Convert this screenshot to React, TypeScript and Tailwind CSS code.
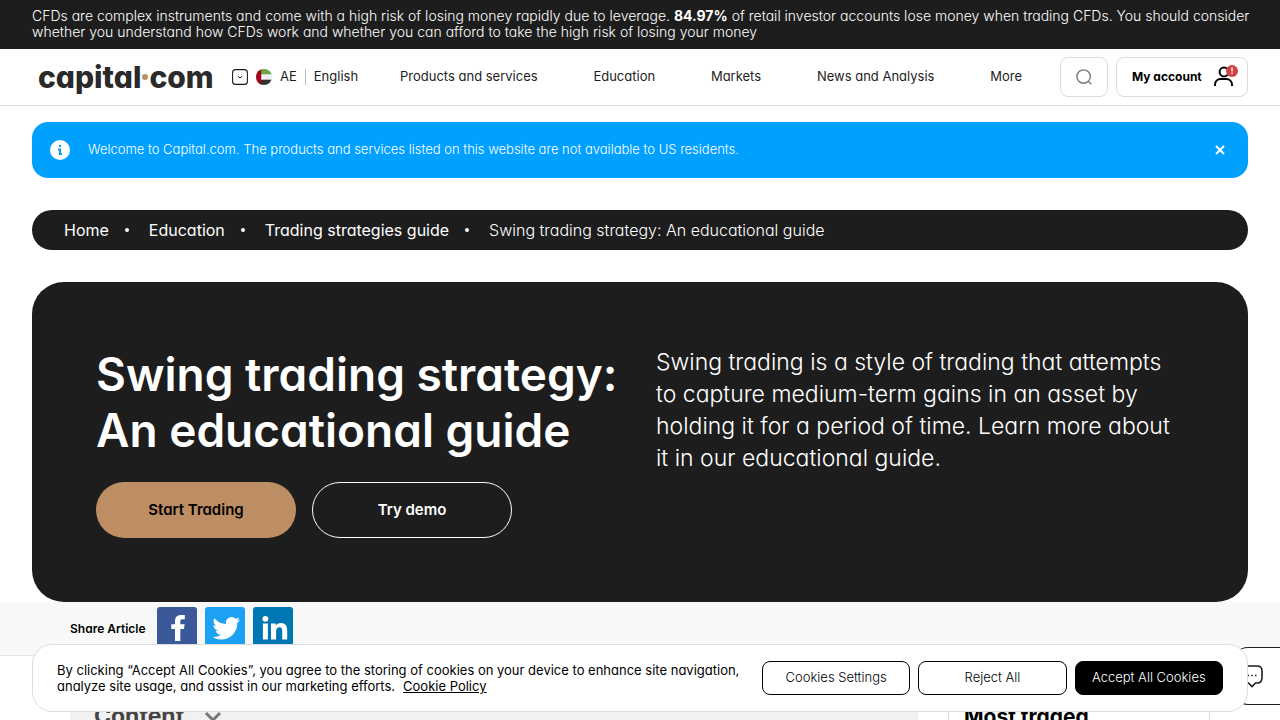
import React from "react";

const navItems = ["Products and services", "Education", "Markets", "News and Analysis", "More"];
const crumbs = ["Home", "Education", "Trading strategies guide"];

function Flag() {
  return (
    <svg viewBox="0 0 16 16" className="size-4" aria-hidden="true">
      <defs>
        <clipPath id="flag-round">
          <circle cx="8" cy="8" r="8" />
        </clipPath>
      </defs>
      <g clipPath="url(#flag-round)">
        <rect width="16" height="16" fill="#f0f0f0" />
        <rect width="16" height="5.3" fill="#6da544" />
        <rect y="10.7" width="16" height="5.3" fill="#333" />
        <rect width="5.2" height="16" fill="#a2001d" />
      </g>
    </svg>
  );
}

function Header() {
  return (
    <header className="flex h-[57px] items-center border-b border-[#dcdcdc] bg-white px-8 text-[13px] text-[#1d1d1d]">
      <a href="#" aria-label="capital.com" className="flex w-[200px] shrink-0 items-center pl-[6px] text-[30px] leading-10 font-extrabold text-[#2a2a2a]">
        <span>capital</span>
        <span className="mx-px size-[6px] shrink-0 rounded-full bg-[#bd8e64]" />
        <span>com</span>
      </a>
      <button className="flex w-[168px] shrink-0 items-center gap-2 text-left">
        <svg viewBox="0 0 16 16" className="size-4" fill="none" stroke="#1d1d1d" aria-hidden="true">
          <rect x="0.6" y="0.6" width="14.8" height="14.8" rx="3" strokeWidth="1.1" />
          <path d="m6 7.2 2 1.8 2-1.8" />
        </svg>
        <Flag />
        <span>AE</span>
        <span className="h-4 w-px bg-[#bbb]" />
        <span>English</span>
      </button>
      <nav className="flex flex-1 justify-between pr-[38px]">
        {navItems.map((n) => (
          <a key={n} href="#">{n}</a>
        ))}
      </nav>
      <button aria-label="Search" className="mr-2 flex h-10 w-12 items-center justify-center rounded-lg border border-[#dcdcdc]">
        <svg viewBox="0 0 16 16" className="size-4" fill="none" stroke="#777" strokeWidth="1.4" aria-hidden="true">
          <circle cx="7.6" cy="7.6" r="6.7" />
          <path d="m12.6 12.6 2.6 2.6" />
        </svg>
      </button>
      <button className="flex h-10 w-[132px] items-center justify-between rounded-lg border border-[#dcdcdc] pr-2 pl-[15px] text-[12px] font-bold text-black">
        My account
        <svg viewBox="0 0 26 24" className="h-6 w-[26px]" aria-hidden="true">
          <g fill="none" stroke="#000" strokeWidth="2">
            <circle cx="11" cy="7" r="4.4" />
            <path d="M2 21v-1.5a5.500 5.500 0 0 1 5.500-5.500h6a5.500 5.500 0 0 1 5.500 5.500V21" />
          </g>
          <circle cx="19" cy="6" r="6" fill="#d64045" />
          <path d="M19 2.500v4M19 7.600v1.500" stroke="#fff" strokeWidth="1.400" />
        </svg>
      </button>
    </header>
  );
}

function Socials() {
  return (
    <div className="flex gap-2">
      <a href="#" aria-label="Facebook">
        <svg viewBox="0 0 40 40" className="size-10">
          <rect width="40" height="40" rx="3" fill="#3b5998" />
          <path fill="#fff" d="M18 34V22h-3.700v-4.700H18v-3.200C18 10.200 20.200 8 24 8h3.800v4.300h-2.300c-1.800 0-2.200.8-2.200 2.200v2.800h4.300l-.6 4.700h-3.700v12z" />
        </svg>
      </a>
      <a href="#" aria-label="Twitter">
        <svg viewBox="0 0 40 40" className="size-10">
          <rect width="40" height="40" rx="3" fill="#1da1f2" />
          <path transform="translate(7.500 7.500) scale(1.150)" fill="#fff" d="M23.950 4.570a10 10 0 0 1-2.820.77 4.960 4.960 0 0 0 2.160-2.720c-.95.550-2 .960-3.130 1.180a4.920 4.920 0 0 0-8.380 4.480C7.690 8.100 4.070 6.130 1.640 3.160a4.820 4.820 0 0 0-.67 2.480c0 1.710.87 3.210 2.190 4.100a4.900 4.900 0 0 1-2.230-.620v.060a4.920 4.920 0 0 0 3.950 4.830 5 5 0 0 1-2.210.080 4.940 4.940 0 0 0 4.600 3.420A9.870 9.870 0 0 1 0 19.540a13.990 13.990 0 0 0 7.550 2.210c9.050 0 14-7.500 14-13.980 0-.210 0-.420-.020-.630a9.940 9.940 0 0 0 2.460-2.550z" />
        </svg>
      </a>
      <a href="#" aria-label="LinkedIn">
        <svg viewBox="0 0 40 40" className="size-10">
          <rect width="40" height="40" rx="3" fill="#0077b5" />
          <g fill="#fff">
            <circle cx="12.400" cy="11.800" r="2.900" />
            <path d="M9.900 16.400h5V32.500h-5zM18 16.400h4.700v2.200c1-1.600 2.600-2.600 5-2.600 4.800 0 6.500 2.800 6.500 7.400v9.100h-5v-8.300c0-2.200-.4-4-2.700-4-2.400 0-3.400 1.700-3.400 4v8.300H18z" />
          </g>
        </svg>
      </a>
    </div>
  );
}

function CookieBanner() {
  const base = "h-[34px] flex-1 rounded-lg border border-black text-[13px] font-light";
  return (
    <section aria-label="Cookies" className="fixed inset-x-8 bottom-2 z-20 flex h-[68px] items-center justify-between rounded-[20px] border border-[#dcdcdc] bg-white px-6 text-black">
      <p className="w-[692px] text-[13px] leading-4">
        By clicking “Accept All Cookies”, you agree to the storing of cookies on your device to enhance site navigation, analyze site usage, and assist in our marketing efforts.
        <a href="#" className="ml-2 underline">Cookie Policy</a>
      </p>
      <div className="flex w-[461px] gap-2">
        <button className={base}>Cookies Settings</button>
        <button className={base}>Reject All</button>
        <button className="h-[34px] flex-1 rounded-lg border border-black bg-black text-[13px] font-light text-white">Accept All Cookies</button>
      </div>
    </section>
  );
}

export default function App() {
  return (
    <div className="h-screen overflow-hidden bg-white font-['Inter',sans-serif] text-black [font-feature-settings:'cv11']">
      <p className="bg-[#1d1d1d] pt-2 pr-5 pb-[9px] pl-8 text-[14px] leading-4 font-light text-white">
        CFDs are complex instruments and come with a high risk of losing money rapidly due to leverage. <strong className="font-bold">84.97%</strong> of retail investor accounts lose money when trading CFDs. You should consider whether you understand how CFDs work and whether you can afford to take the high risk of losing your money
      </p>
      <Header />
      <main>
        <div className="px-8 pt-4">
          <div className="flex h-14 items-center rounded-2xl bg-[#00a0ff] pr-[22px] pl-[18px] text-[13px] font-light text-white">
            <svg viewBox="0 0 20 20" className="mr-[18px] size-5" aria-hidden="true">
              <circle cx="10" cy="10" r="10" fill="#fff" />
              <path d="M9 5h2v2H9zM8 8.500h3V13h1v2H9v-4.500H8z" fill="#00a0ff" />
            </svg>
            <p className="flex-1">Welcome to Capital.com. The products and services listed on this website are not available to US residents.</p>
            <button aria-label="Close">
              <svg viewBox="0 0 12 12" className="size-3" stroke="#fff" strokeWidth="2" aria-hidden="true">
                <path d="m2 2 8 8M10 2l-8 8" />
              </svg>
            </button>
          </div>
          <nav aria-label="Breadcrumb" className="mt-8 flex h-10 items-center rounded-[20px] bg-[#1d1d1d] px-8 text-[16px] text-white">
            {crumbs.map((c) => (
              <React.Fragment key={c}>
                <a href="#">{c}</a>
                <span className="mr-5 ml-4 size-1 rounded-full bg-white" />
              </React.Fragment>
            ))}
            <span className="font-light">Swing trading strategy: An educational guide</span>
          </nav>
          <section className="mt-8 grid grid-cols-2 gap-8 rounded-[32px] bg-[#1d1d1d] p-16 text-white">
            <div>
              <h1 className="text-[46px] leading-[56px] font-semibold whitespace-nowrap">
                Swing trading strategy:
                <br />
                An educational guide
              </h1>
              <div className="mt-6 flex gap-4 text-[15px] font-semibold">
                <button className="h-14 w-[200px] rounded-full bg-[#bd8e64] text-black">Start Trading</button>
                <button className="h-14 w-[200px] rounded-full border border-white">Try demo</button>
              </div>
            </div>
            <p className="text-[23px] leading-8 font-light">
              Swing trading is a style of trading that attempts to capture medium-term gains in an asset by holding it for a period of time. Learn more about it in our educational guide.
            </p>
          </section>
        </div>
        <div className="flex h-[54px] items-start border-b border-[#e4e4e4] bg-[#f8f8f8] px-[70px] pt-[5px]">
          <span className="mt-3 w-[87px] text-[12px] leading-5 font-semibold whitespace-nowrap">Share Article</span>
          <Socials />
        </div>
        <div className="flex gap-[30px] px-[70px] pt-6">
          <section className="flex h-40 flex-1 items-start gap-5 bg-[#f1f1f2] px-6 pt-5 text-[#444]">
            <h2 className="text-[23px] leading-8 font-bold">Content</h2>
            <svg viewBox="0 0 18 18" className="mt-2 size-[18px]" fill="none" stroke="#777" strokeWidth="3" aria-hidden="true">
              <path d="m2 5 7 7 7-7" />
            </svg>
          </section>
          <aside className="h-40 w-[262px] border border-[#dcdcdc] px-[15px] pt-5">
            <h2 className="text-[21px] leading-8 font-bold">Most traded</h2>
          </aside>
        </div>
      </main>
      <button aria-label="Chat" className="fixed right-0 bottom-[15px] z-10 flex h-[58px] w-12 items-center rounded-l-2xl border border-r-0 border-[#1d1d1d] bg-white pl-[6px]">
        <svg viewBox="0 0 24 24" className="size-6" fill="none" stroke="#1d1d1d" strokeWidth="1.600" aria-hidden="true">
          <path d="M7 2h11c3.500 0 5 1.500 5 5v6.500c0 3.500-1.500 5.500-5 5.500h-1.500L13 22.500 9.500 19H8c-3.500 0-5-1.500-5-5V7c0-3.500 1.500-5 4-5z" />
          <path d="M8.500 11.500h1.500M12.200 11.500h1.500M16 11.500h1.500" />
        </svg>
      </button>
      <CookieBanner />
    </div>
  );
}
